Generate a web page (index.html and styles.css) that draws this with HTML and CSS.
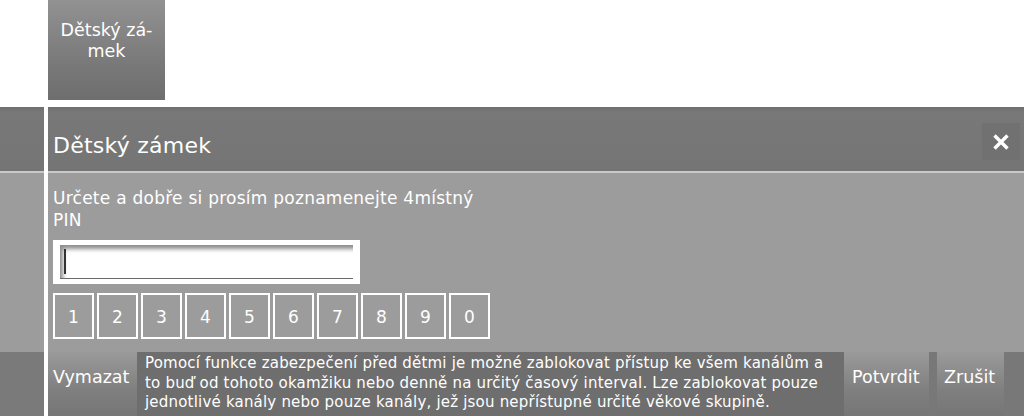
FILE: index.html
```html
<!DOCTYPE html>
<html lang="cs">
<head>
<meta charset="utf-8">
<title>Dětský zámek</title>
<link rel="stylesheet" href="styles.css">
</head>
<body>
<div class="side">
  <div class="s-top"></div>
  <div class="s-head"></div>
  <div class="s-rule"></div>
  <div class="s-body"></div>
  <div class="s-foot"></div>
</div>
<div class="main">
  <div class="top">
    <div class="tile">Dětský zá-<br>mek</div>
  </div>
  <div class="header">
    <div class="title">Dětský zámek</div>
    <div class="close">
      <svg width="18" height="18" viewBox="0 0 18 18"><path d="M2.5 2.5 L15.5 15.5 M15.5 2.5 L2.5 15.5" stroke="#fff" stroke-width="3.4" fill="none"/></svg>
    </div>
  </div>
  <div class="rule"></div>
  <div class="content">
    <div class="prompt">Určete a dobře si prosím poznamenejte 4místný<br>PIN</div>
    <div class="field"><div class="field-in"><span class="caret"></span></div></div>
    <div class="keys">
      <div class="key">1</div><div class="key">2</div><div class="key">3</div><div class="key">4</div><div class="key">5</div>
      <div class="key">6</div><div class="key">7</div><div class="key">8</div><div class="key">9</div><div class="key">0</div>
    </div>
  </div>
  <div class="footer">
    <div class="btn btn-clear">Vymazat</div>
    <div class="help">Pomocí funkce zabezpečení před dětmi je možné zablokovat přístup ke všem kanálům a<br>to buď od tohoto okamžiku nebo denně na určitý časový interval. Lze zablokovat pouze<br>jednotlivé kanály nebo pouze kanály, jež jsou nepřístupné určité věkové skupině.</div>
    <div class="btn btn-ok">Potvrdit</div>
    <div class="btn btn-cancel">Zrušit</div>
  </div>
</div>
</body>
</html>
```
FILE: styles.css
```css
html, body {
  margin: 0;
  padding: 0;
}
body {
  width: 1024px;
  height: 416px;
  overflow: hidden;
  background: #fff;
  display: flex;
  gap: 4px;
  font-family: "DejaVu Sans", "Liberation Sans", sans-serif;
  color: #fff;
}
.side {
  width: 44px;
  display: flex;
  flex-direction: column;
}
.s-top { height: 107px; background: #fff; }
.s-head { height: 64px; background: linear-gradient(#6e6e6e, #787878 8%, #757575); }
.s-rule { height: 2px; background: #c9c9c9; }
.s-body { height: 179px; background: #9c9c9c; }
.s-foot { height: 64px; background: #7a7a7a; }

.main {
  flex: 1;
  display: flex;
  flex-direction: column;
}
.top {
  height: 107px;
  display: flex;
}
.tile {
  width: 117px;
  height: 100px;
  box-sizing: border-box;
  padding-top: 20px;
  text-align: center;
  font-size: 17.5px;
  line-height: 21px;
  background: linear-gradient(#929292, #7a7a7a 60%, #6e6e6e);
}
.header {
  height: 64px;
  display: flex;
  align-items: flex-start;
  justify-content: space-between;
  background: linear-gradient(#6e6e6e, #787878 8%, #757575);
}
.title {
  padding: 26px 0 0 5px;
  font-size: 22px;
  line-height: 26px;
  letter-spacing: 0.25px;
}
.close {
  width: 38px;
  height: 37px;
  margin: 16px 4px 0 0;
  background: #717171;
  display: flex;
  align-items: center;
  justify-content: center;
}
.close svg { display: block; margin-top: 1px; }
.rule {
  height: 2px;
  background: #c9c9c9;
}
.content {
  height: 179px;
  box-sizing: border-box;
  background: #9c9c9c;
  padding: 14px 0 0 5px;
}
.prompt {
  font-size: 17px;
  line-height: 22px;
  letter-spacing: 0.25px;
}
.field {
  width: 307px;
  height: 44px;
  box-sizing: border-box;
  margin-top: 9px;
  padding: 5px 7px 5px 7px;
  background: #fff;
}
.field-in {
  height: 100%;
  box-sizing: border-box;
  background: #fff;
  border-bottom: 1px solid #6a6a6a;
  box-shadow: inset 4px 5px 4px -1px rgba(0, 0, 0, 0.45);
  display: flex;
  align-items: center;
  padding-left: 4px;
}
.caret {
  width: 2px;
  height: 25px;
  background: #333;
}
.keys {
  display: flex;
  gap: 3px;
  margin-top: 9px;
}
.key {
  width: 41px;
  height: 46px;
  box-sizing: border-box;
  border: 2px solid #fff;
  display: flex;
  align-items: center;
  justify-content: center;
  font-size: 17px;
  padding-top: 2px;
}
.footer {
  height: 64px;
  display: flex;
  background: #787878;
}
.btn {
  height: 100%;
  box-sizing: border-box;
  font-size: 17.5px;
  line-height: 22px;
  padding-top: 14px;
  background: linear-gradient(#9a9a9a, #7f7f7f 60%, #767676);
  white-space: nowrap;
}
.btn-clear {
  width: 89px;
  padding-left: 5px;
}
.help {
  width: 707px;
  box-sizing: border-box;
  background: #6e6e6e;
  padding: 2px 0 0 8px;
  font-size: 15px;
  line-height: 19.5px;
  letter-spacing: 0.2px;
  white-space: nowrap;
}
.btn-ok {
  width: 85px;
  padding-left: 8px;
  margin-right: 8px;
}
.btn-cancel {
  width: 67px;
  padding-left: 7px;
}
```
